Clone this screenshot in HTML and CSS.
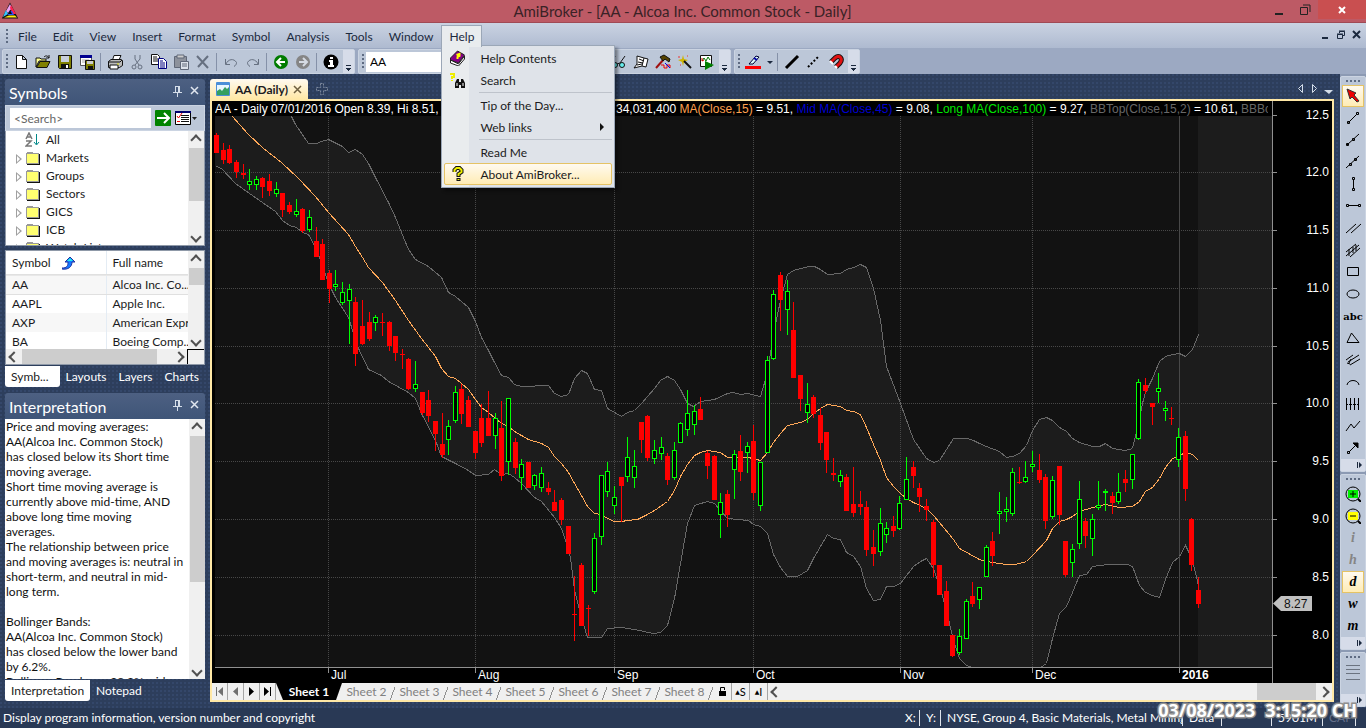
FILE: index.html
```html
<!DOCTYPE html>
<html lang="en">
<head>
<meta charset="utf-8">
<title>AmiBroker - [AA - Alcoa Inc. Common Stock - Daily]</title>
<link rel="stylesheet" href="styles.css">
</head>
<body>
<div class="app">
  <header class="titlebar">
    <svg class="logo" width="18" height="18" viewBox="0 0 18 18"><path d="M9 .5.800 16.500h16.400z" fill="#111"/><path d="M9 2 5 9l2 2 4-5z" fill="#f0a0f0"/><path d="M5 8 2 15l5-3z" fill="#37c5ff"/><path d="M10 3l5 9-3 0-3-6z" fill="#ff2050"/><path d="M8 9h3l2 4-6 0z" fill="#2b50ff"/><path d="M3 15.500l5-2h6l2 2z" fill="#ffee10"/><path d="M9 8l-2 4h4z" fill="#111"/></svg>
    <h1>AmiBroker - [AA - Alcoa Inc. Common Stock - Daily]</h1>
    <div class="winbtns">
      <button aria-label="Minimize"><svg width="12" height="12" viewBox="0 0 12 12"><path d="M2 9h8v2H2z" fill="#222"/></svg></button>
      <button aria-label="Restore"><svg width="12" height="12" viewBox="0 0 12 12"><path d="M1.500 3.500h7v7h-7zM4 1h7v7" fill="none" stroke="#222"/></svg></button>
      <button class="close" aria-label="Close"><svg width="10" height="10" viewBox="0 0 10 10"><path d="M2 2l6 6M8 2l-6 6" stroke="#fff" stroke-width="2"/></svg></button>
    </div>
  </header>

  <nav class="menubar">
    <span class="grip"></span>
    <button>File</button><button>Edit</button><button>View</button><button>Insert</button><button>Format</button><button>Symbol</button><button>Analysis</button><button>Tools</button><button>Window</button>
    <div class="menuhost">
      <button class="open">Help</button>
      <div class="menu">
        <button><svg width="16" height="16" viewBox="0 0 16 16"><path d="M1 8 8 1l7 4-6 8-8-3z" fill="#850085" stroke="#222"/><path d="M1 10l8 4 6-8v3l-6 7-8-3z" fill="#fff" stroke="#222"/><path d="M7 5l3-1v2L8 7v2" stroke="#ff0" stroke-width="2" fill="none"/></svg>Help Contents</button>
        <button><svg width="17" height="16" viewBox="0 0 17 16"><path d="M1 2h4v3H3v2M3 8v1" fill="none" stroke="#ee0" stroke-width="2"/><path d="M6 16v-5l2-4h2v3h2V7h2l2 4v5h-4v-3h-2v3z" fill="#111"/><path d="M8 11v3M14 11v3" stroke="#fff"/></svg>Search</button>
        <hr>
        <button>Tip of the Day...</button>
        <button class="sub">Web links</button>
        <hr>
        <button>Read Me</button>
        <button class="hot"><svg width="16" height="16" viewBox="0 0 16 16"><path d="M5 6V4l2-2h3l2 2v2L9 8v3M9 12v3" fill="none" stroke="#111" stroke-width="4"/><path d="M5 6V4l2-2h3l2 2v2L9 8v2M9 13v1" fill="none" stroke="#ee0" stroke-width="2"/></svg>About AmiBroker...</button>
      </div>
    </div>
    <div class="docbtns">
      <button aria-label="Minimize document"><svg width="10" height="10" viewBox="0 0 10 10"><path d="M2 7h6v2H2z" fill="#1b293e"/></svg></button>
      <button aria-label="Restore document"><svg width="10" height="10" viewBox="0 0 10 10"><path d="M1.500 4.500h5v4h-5zM1 4h6M3.500 3V1.500h5v4H7M3 1h6" fill="none" stroke="#1b293e"/></svg></button>
      <button aria-label="Close document"><svg width="10" height="10" viewBox="0 0 10 10"><path d="M1 1l7 7M8 1L1 8" stroke="#1b293e" stroke-width="2"/></svg></button>
    </div>
  </nav>

  <div class="toolbars">
    <div class="toolbar">
      <span class="grip"></span>
      <button aria-label="New"><svg viewBox="0 0 16 16"><path d="M3.500 1.500h6l4 4v9h-10zM9.500 1.500v4h4" fill="#fff" stroke="#111"/></svg></button>
      <button aria-label="Open"><svg viewBox="0 0 16 16"><path d="M1 4h4l1 1h5v2H4l-3 6z" fill="#ffff90" stroke="#111"/><path d="M1.500 13.500 5 7.500h10l-3 6z" fill="#808000" stroke="#111"/><path d="M9 3c2-2 4-1 5 1M14 1v3h-3" fill="none" stroke="#111"/></svg></button>
      <button aria-label="Save"><svg viewBox="0 0 16 16"><path d="M1.500 1.500h13v13h-12l-1-1z" fill="#808000" stroke="#111"/><path d="M4 2h8v6H4z" fill="#c8cfdc"/><path d="M4 10h8v5H4z" fill="#111"/><path d="M9 11h2v3H9z" fill="#fff"/></svg></button>
      <button aria-label="Save all"><svg viewBox="0 0 16 16"><path d="M1.500 1.500h11v10h-11z" fill="#fff" stroke="#555"/><path d="M1 1h12v3H1z" fill="#000090"/><path d="M3 6h7M3 8h4" stroke="#aaa"/><path d="M6.500 6.500h9v9h-9z" fill="#808000" stroke="#111"/><path d="M8 7h6v3H8z" fill="#ccc"/><path d="M9 12h5v3H9z" fill="#111"/></svg></button>
      <span class="sep"></span>
      <button aria-label="Print"><svg viewBox="0 0 16 16"><path d="M5.500 6 7 1.500h7L12 6" fill="#fff" stroke="#111"/><path d="M1.500 7.500 4 5.500h10l1.500 1v5l-3 2h-11z" fill="#bbb" stroke="#111"/><path d="M1 8h12M13 8l2-2M3 11h8v4H3z" fill="#fff" stroke="#111"/><path d="M10 10h2" stroke="#dd0"/></svg></button>
      <button aria-label="Cut"><svg viewBox="0 0 16 16"><path d="M6 1v4l4 6M11 1v4l-5 6" fill="none" stroke="#667080"/><circle cx="5" cy="13" r="2" fill="none" stroke="#667080"/><circle cx="11" cy="13" r="2" fill="none" stroke="#667080"/></svg></button>
      <button aria-label="Copy"><svg viewBox="0 0 16 16"><path d="M.5.500h6l2 2v8h-8z" fill="#fff" stroke="#111"/><path d="M2 3h4M2 5h5M2 7h5" stroke="#111"/><path d="M7.500 4.500h5l3 3v7h-8z" fill="#fff" stroke="#000080"/><path d="M9 7h3M9 9h5M9 11h5M9 13h5" stroke="#000080"/></svg></button>
      <button aria-label="Paste"><svg viewBox="0 0 16 16"><path d="M1.500 2.500h12v11h-12z" fill="#8d929c" stroke="#606878"/><path d="M4 1h7v3H4z" fill="#ccc" stroke="#606878"/><path d="M7.500 7.500h8v8h-8z" fill="#dde2ea" stroke="#606878"/><path d="M9 10h5M9 12h5" stroke="#606878"/></svg></button>
      <button aria-label="Delete"><svg viewBox="0 0 16 16"><path d="M2 2l11 12M13 2 3 13" stroke="#667080" stroke-width="2"/></svg></button>
      <span class="sep"></span>
      <button aria-label="Undo"><svg viewBox="0 0 16 16"><path d="M2.500 5v5.500H7M3 10c2-5 8-6 10.500-1.500 0 2-1 3-2.500 4" fill="none" stroke="#667080"/></svg></button>
      <button aria-label="Redo"><svg viewBox="0 0 16 16"><path d="M13.500 5v5.500H9M13 10C11 5 5 4 2.500 8.500c0 2 1 3 2.500 4" fill="none" stroke="#667080"/></svg></button>
      <span class="sep"></span>
      <button aria-label="Back"><svg viewBox="0 0 16 16"><circle cx="8" cy="8" r="7" fill="#007c00"/><path d="M12 8H4M8 4 4 8l4 4" fill="none" stroke="#fff" stroke-width="2"/></svg></button>
      <button aria-label="Forward"><svg viewBox="0 0 16 16"><circle cx="8" cy="8" r="7" fill="#858585"/><path d="M4 8h8M8 4l4 4-4 4" fill="none" stroke="#d5dae2" stroke-width="2"/></svg></button>
      <span class="sep"></span>
      <button aria-label="Information"><svg viewBox="0 0 16 16"><circle cx="8" cy="8" r="7.500" fill="#000"/><path d="M7 3h3v2H7zM6 6h4v5h1v2H5v-2h2V8H6z" fill="#fff"/></svg></button>
      <span class="more"></span>
    </div>
    <div class="toolbar">
      <span class="grip"></span>
      <input class="symbolbox" aria-label="Ticker" value="AA">
      <button aria-label="Real-time quote"><svg viewBox="0 0 16 16"><path d="M1 10l3-8M9 9l5-7M6 10l3-1" stroke="#111" fill="none"/><circle cx="4" cy="11" r="2.500" fill="#6ee" stroke="#111"/><circle cx="11" cy="11" r="2.500" fill="#6ee" stroke="#111"/></svg></button>
      <button aria-label="Formula editor"><svg viewBox="0 0 16 16"><path d="M4 2l7 2 4 1-2 8-4-1-8 2 3-4z" fill="#fff" stroke="#111"/><path d="M6 5l5 2M5 8l5 1M4 11l5-1M11 4l-2 8" stroke="#111" fill="none"/></svg></button>
      <button aria-label="Analysis"><svg viewBox="0 0 16 16"><path d="M1 14 9 5" stroke="#a01010" stroke-width="2"/><path d="M5 3l4-2 6 4-1 3-4-3-2 2z" fill="#554400" stroke="#111"/><path d="M6 11h3v3h3v-3h3v3" fill="none" stroke="#e00"/><path d="M10 9l5 5" stroke="#00e"/></svg></button>
      <button aria-label="Wizard"><svg viewBox="0 0 16 16"><path d="M6 1l1 4 4 1-4 2-1 4-1-4-4-2 4-1z" fill="#cfb400"/><path d="M7 7l7 7" stroke="#111" stroke-width="2"/><path d="M2 2v2M10 2h1M3 11h1" stroke="#e33"/></svg></button>
      <button aria-label="Run"><svg viewBox="0 0 16 16"><path d="M1.500 1.500h11v11h-11z" fill="#fff" stroke="#111"/><path d="M3 7l2-3 2 3 2-4 2 3" stroke="#070" fill="none"/><path d="M3 4v3l2-1" stroke="#d00" fill="none"/><path d="M6 7v9l9-5z" fill="#008000"/></svg></button>
      <span class="more"></span>
    </div>
    <div class="toolbar">
      <span class="grip"></span>
      <button aria-label="Line color"><svg viewBox="0 0 16 16"><path d="M0 12h16v3H0z" fill="#f00"/><path d="M4 10 11 2l3 1-6 7z" fill="#dff" stroke="#003"/><path d="M9 4l3 2" stroke="#00a" stroke-width="2"/></svg></button>
      <button class="drop" aria-label="Color list"><svg viewBox="0 0 8 16"><path d="M1 7h6L4 10z" fill="#1b293e"/></svg></button>
      <span class="sep"></span>
      <button aria-label="Thick line"><svg viewBox="0 0 16 16"><path d="M2 14 14 2" stroke="#000" stroke-width="3"/></svg></button>
      <button aria-label="Dotted line"><svg viewBox="0 0 16 16"><path d="M2 13 13 2" stroke="#000" stroke-width="2" stroke-dasharray="2 2"/></svg></button>
      <button aria-label="Snap"><svg viewBox="0 0 16 16"><path d="M3 8l4-4c5-4 8 1 5 5l-4 4" fill="none" stroke="#111" stroke-width="5"/><path d="M3 8l4-4c5-4 8 1 5 5l-4 4" fill="none" stroke="#e01010" stroke-width="3"/><path d="M2 7l3 3M7 12l2 2" stroke="#fff" stroke-width="2"/></svg></button>
      <span class="more"></span>
    </div>
  </div>

  <div class="workspace">
    <aside class="side">
      <section class="pane symbols">
        <h2>Symbols<span class="panebtns"><svg width="9" height="12" viewBox="0 0 9 12"><path d="M2.500 1v6M5.500 1v6M2 1.500h5M6.500 1v6M0 7.500h9M4.500 8v4" stroke="#d5deea" fill="none"/></svg><svg width="9" height="9" viewBox="0 0 9 9"><path d="M1 1l7 7M8 1 1 8" stroke="#e0e6ef" stroke-width="1.500"/></svg></span></h2>
        <div class="search">
          <input aria-label="Search symbols" placeholder="&lt;Search&gt;">
          <button aria-label="Go"><svg width="16" height="16" viewBox="0 0 16 16"><rect width="16" height="16" rx="1" fill="#008300"/><path d="M2 8h11M9 3l5 5-5 5" fill="none" stroke="#fff" stroke-width="2"/></svg></button>
          <button aria-label="Options"><svg width="23" height="16" viewBox="0 0 23 16"><path d="M.5 1.500h15v13H.5z" fill="#fff" stroke="#000"/><path d="M0 1h16v2H0z" fill="#000070"/><path d="M6 5.500h8M6 7.500h8M6 9.500h8M6 11.500h8" stroke="#111"/><path d="M2 6l1.500 2L7 3M2 11.500h3" stroke="#e00" fill="none"/><path d="M17 7h5l-2.500 3z" fill="#222"/></svg></button>
        </div>
        <div class="scrolled tree">
          <ul>
            <li><svg class="az" width="16" height="16" viewBox="0 0 16 16"><path d="M1 7l3-6 3 6M2 5h4M1 9h5l-5 5h6" fill="none" stroke="#777" stroke-width="1.500"/><path d="M11.500 2v10M9 10l2.500 3 2.500-3" fill="none" stroke="#088"/></svg>All</li>
            <li class="folder">Markets</li>
            <li class="folder">Groups</li>
            <li class="folder">Sectors</li>
            <li class="folder">GICS</li>
            <li class="folder">ICB</li>
            <li class="folder">Watch Lists</li>
          </ul>
          <div class="vscroll"><i class="up"></i><b class="t53"></b><i class="down"></i></div>
        </div>
        <div class="list">
          <div class="scrolled">
            <table>
              <thead><tr><th>Symbol <svg width="15" height="14" viewBox="0 0 15 14"><path d="M0 12c5 0 6-2 6-6H3l5-5 5 5h-3c0 5-4 8-10 7z" fill="#1478ff" stroke="#2030a0"/><path d="M5 5l3-3 3 3z" fill="#2ee"/></svg></th><th>Full name</th></tr></thead>
              <tbody>
                <tr><td>AA</td><td>Alcoa Inc. Co...</td></tr>
                <tr><td>AAPL</td><td>Apple Inc.</td></tr>
                <tr><td>AXP</td><td>American Expr...</td></tr>
                <tr><td>BA</td><td>Boeing Comp...</td></tr>
              </tbody>
            </table>
            <div class="vscroll"><i class="up"></i><b class="t17"></b><i class="down"></i></div>
          </div>
          <div class="hscroll"><i class="left"></i><b></b><i class="right"></i><span class="corner"></span></div>
        </div>
      </section>
      <div class="tabs"><button class="on">Symb...</button><button>Layouts</button><button>Layers</button><button>Charts</button></div>
      <section class="pane interp">
        <h2>Interpretation<span class="panebtns"><svg width="9" height="12" viewBox="0 0 9 12"><path d="M2.500 1v6M5.500 1v6M2 1.500h5M6.500 1v6M0 7.500h9M4.500 8v4" stroke="#d5deea" fill="none"/></svg><svg width="9" height="9" viewBox="0 0 9 9"><path d="M1 1l7 7M8 1 1 8" stroke="#e0e6ef" stroke-width="1.500"/></svg></span></h2>
        <div class="scrolled">
          <p>Price and moving averages:<br>AA(Alcoa Inc. Common Stock)<br>has closed below its Short time<br>moving average.<br>Short time moving average is<br>currently above mid-time, AND<br>above long time moving<br>averages.<br>The relationship between price<br>and moving averages is: neutral in<br>short-term, and neutral in mid-<br>long term.<br><br>Bollinger Bands:<br>AA(Alcoa Inc. Common Stock)<br>has closed below the lower band<br>by 6.2%.<br>Bollinger Bands are 28.2% wider</p>
          <div class="vscroll"><i class="up"></i><b class="t146"></b><i class="down"></i></div>
        </div>
      </section>
      <div class="tabs low"><button class="on">Interpretation</button><button>Notepad</button></div>
    </aside>

    <main class="doc">
      <div class="doctabs">
        <button class="doctab"><svg width="14" height="14" viewBox="0 0 14 14"><rect width="14" height="14" rx="1" fill="#4b8fd8"/><path d="M1 3h12v10H1z" fill="#e8f6ff"/><path d="M1 13V9l3-2 2 2 3-4 2 2 2-2v8z" fill="#35a060"/></svg>AA (Daily)<svg width="9" height="9" viewBox="0 0 9 9"><path d="M1 1l7 7M8 1 1 8" stroke="#6f6040" stroke-width="1.500"/></svg></button>
        <button class="plus" aria-label="New chart"><svg width="12" height="12" viewBox="0 0 12 12"><path d="M4.500.500h3v4h4v3h-4v4h-3v-4h-4v-3h4z" fill="none" stroke="#7c889c" stroke-dasharray="2 1"/></svg></button>
        <svg class="tabnav" width="38" height="12" viewBox="0 0 38 12"><path d="M6.500 1.500v8l-4-4zM16.500 1.500v8l4-4z" fill="none" stroke="#d5deea"/><path d="M28 7h9l-4 4z" fill="#d5deea"/></svg>
      </div>
      <div class="docbody">
        <div class="readout"><span class="quote">AA - Daily 07/01/2016 Open 8.39, Hi 8.51, Lo 8.12, Close 8.27 (-4.1%) Vol</span><span>34,031,400 <span class="c15">MA(Close,15)</span> = 9.51, <span class="c45">Mid MA(Close,45)</span> = 9.08, <span class="c100">Long MA(Close,100)</span> = 9.27, <span class="bb">BBTop(Close,15,2)</span> = 10.61, <span class="bb">BBBot(Close,15,2)</span></span></div>
        <svg class="chart" id="chart" viewBox="212 116 1120 567" role="img" aria-label="AA daily candlestick chart"></svg>
        <div class="sheets">
          <div class="sheetnav">
            <button aria-label="First"><svg width="9" height="9" viewBox="0 0 9 9"><path d="M1 0h1v9H1zM8 0v9L3 4.500z" fill="#707070"/></svg></button>
            <button aria-label="Previous"><svg width="9" height="9" viewBox="0 0 9 9"><path d="M7 0v9L2 4.500z" fill="#707070"/></svg></button>
            <button aria-label="Next"><svg width="9" height="9" viewBox="0 0 9 9"><path d="M2 0v9l5-4.500z"/></svg></button>
            <button aria-label="Last"><svg width="9" height="9" viewBox="0 0 9 9"><path d="M7 0h1v9H7zM1 0v9l5-4.500z"/></svg></button>
          </div>
          <button class="sheet on">Sheet 1</button><button class="sheet">Sheet 2</button><button class="sheet">Sheet 3</button><button class="sheet">Sheet 4</button><button class="sheet">Sheet 5</button><button class="sheet">Sheet 6</button><button class="sheet">Sheet 7</button><button class="sheet">Sheet 8</button>
          <div class="locks"><button aria-label="Lock"><svg width="9" height="11" viewBox="0 0 9 11"><path d="M1 5h7v5H1z"/><path d="M2.500 5V1.500h4V4" fill="none" stroke="#000"/></svg></button><button><small>▲</small>S</button><button><small>▲</small>I</button></div>
          <div class="hscroll"><i class="left"></i><b></b><i class="right"></i></div>
        </div>
      </div>
    </main>

    <aside class="rail">
      <div class="railbar">
        <span class="hgrip"></span>
        <button class="on" aria-label="Select"><svg viewBox="0 0 16 16"><path d="M2 1l9 4-2 2 5 6-2 1-5-5-2 2z" fill="#e00" stroke="#333"/></svg></button>
        <button aria-label="Trend line"><svg viewBox="0 0 16 16"><path d="M3.500 12.500l8-8"/><path d="M2.500 11.500h2v2h-2zM11.500 2.500h2v2h-2z"/></svg></button>
        <button aria-label="Ray"><svg viewBox="0 0 16 16"><path d="M2 13 14 2"/><path d="M1.500 11.500h2v2h-2zM7.500 6.500h2v2h-2z"/></svg></button>
        <button aria-label="Extended line"><svg viewBox="0 0 16 16"><path d="M1 14 14 2"/><path d="M4.500 9.500h2v2h-2zM9.500 4.500h2v2h-2z"/></svg></button>
        <button aria-label="Vertical line"><svg viewBox="0 0 16 16"><path d="M8.500 3v9M7.500 1.500h2v2h-2zM7.500 12.500h2v2h-2z"/></svg></button>
        <button aria-label="Horizontal line"><svg viewBox="0 0 16 16"><path d="M3 7.500h10M1.500 6.500h2v2h-2zM13.500 6.500h2v2h-2z"/></svg></button>
        <button aria-label="Parallel lines"><svg viewBox="0 0 16 16"><path d="M1 13l10-9M6 13l10-9"/></svg></button>
        <button aria-label="Regression channel"><svg viewBox="0 0 16 16"><path d="M1 10l10-8M5 15l10-9M1 14 14 3M4 7v7M8 5v6M11 3v6"/></svg></button>
        <button aria-label="Rectangle"><svg viewBox="0 0 16 16"><path d="M2.500 3.500h11v8h-11z"/></svg></button>
        <button aria-label="Ellipse"><svg viewBox="0 0 16 16"><ellipse cx="8" cy="8" rx="6" ry="4"/></svg></button>
        <button class="abc">abc</button>
        <button aria-label="Triangle"><svg viewBox="0 0 16 16"><path d="M2 12.500h12L6.500 3z"/></svg></button>
        <button aria-label="Pitchfork"><svg viewBox="0 0 16 16"><path d="M1 8l7-5M3 10l11-7M5 13l10-6M2 11l3 1M6 7l-2 4"/></svg></button>
        <button aria-label="Arc"><svg viewBox="0 0 16 16"><path d="M2 11c1-6 11-6 12 0"/></svg></button>
        <button aria-label="Time zones"><svg viewBox="0 0 16 16"><path d="M1.500 2v12M5.500 2v12M9.500 2v12M13.500 2v12"/><path d="M2 8.500h12" stroke-dasharray="1 1"/></svg></button>
        <button aria-label="Zig-zag"><svg viewBox="0 0 16 16"><path d="M1 13 6 6l3 4 6-7"/></svg></button>
        <button aria-label="Arrow"><svg viewBox="0 0 16 16"><path d="M4 12l6-6"/><path d="M8 3h5v5z" fill="#000"/><path d="M2.500 11.500h2v2h-2z"/></svg></button>
        <span class="railmore"></span>
      </div>
      <div class="railbar">
        <span class="hgrip"></span>
        <button aria-label="Zoom in"><svg viewBox="0 0 16 16"><circle cx="8" cy="8" r="7"/><path d="M13 13l3 3" stroke-width="2"/><rect x="3" y="4" width="10" height="8" fill="#0e0" stroke="none"/><path d="M5 8h6M8 5v6"/></svg></button>
        <button aria-label="Zoom out"><svg viewBox="0 0 16 16"><circle cx="8" cy="8" r="7"/><path d="M13 13l3 3" stroke-width="2"/><rect x="3" y="4" width="10" height="8" fill="#ff0" stroke="none"/><path d="M5 8h6"/></svg></button>
        <button class="ltr off">i</button><button class="ltr off">h</button><button class="ltr on">d</button><button class="ltr">w</button><button class="ltr">m</button>
        <span class="railmore"></span>
      </div>
      <div class="railbar last">
        <span class="hgrip"></span>
        <button aria-label="Layers"><svg viewBox="0 0 16 16"><path d="M1 1.500h14M1 5.500h14M1 9.500h14M1 15.500h14" stroke="#6b7380"/></svg></button>
        <span class="railmore"></span>
      </div>
    </aside>
  </div>

  <footer class="status">
    <span class="msg">Display program information, version number and copyright</span>
    <span class="x">X:</span><span class="y">Y:</span><span class="grp">NYSE, Group 4, Basic Materials, Metal Mining</span><span class="data">Data</span><span class="blank"></span><span class="mem">5901M</span><span class="cap">CAP</span>
    <time class="stamp"><span>03/08/2023</span><span>3:15:20 CH</span></time>
  </footer>
</div>
<script src="chart.js"></script>
</body>
</html>
```
FILE: styles.css
```css
* { box-sizing: border-box; }
html, body { margin: 0; height: 100%; }
body { font: 12px/15px Lato, "Open Sans", sans-serif; color: #1b1b22; overflow: hidden; }
button { font: inherit; color: inherit; background: none; border: 0; padding: 0; margin: 0; display: flex; align-items: center; justify-content: center; white-space: nowrap; }
input { font: inherit; border: 0; padding: 0 4px; min-width: 0; }
svg { display: block; flex: none; }
h1, h2, p, ul { margin: 0; padding: 0; font-weight: 400; }

.app { height: 100vh; display: flex; flex-direction: column; background: #2d3e5c; }

.titlebar { height: 23px; flex: none; display: flex; align-items: center; background: #bd5a65; border-bottom: 1px solid #a04a55; }
.logo { margin-left: 1px; }
.titlebar h1 { flex: 1; text-align: center; font-size: 15px; line-height: 22px; color: #3a2226; padding-left: 80px; }
.winbtns { display: flex; align-self: flex-start; height: 19px; }
.winbtns button { width: 26px; }
.winbtns .close { width: 48px; background: #c94f50; }

.menubar { height: 25px; flex: none; display: flex; align-items: stretch; padding: 3px 0 0 4px; background: linear-gradient(#cad3e2, #aebad0); color: #1b293e; }
.menubar > button { padding: 0 8px; height: 20px; }
.grip { width: 2px; margin: 3px 2px; background: repeating-linear-gradient(#5e6b82 0 2px, transparent 2px 4px); flex: none; }
.menubar .grip { margin: 3px 2px 5px 2px; }
.menuhost { position: relative; z-index: 5; }
.menuhost > .open { background: #e9ecee; border: 1px solid #9ba7b7; border-bottom: 0; padding: 0 7px; height: 22px; width: 41px; position: relative; z-index: 2; margin-top: -1px; }
.menu { position: absolute; left: 0; top: 19px; width: 174px; padding: 1px 2px 2px; background: linear-gradient(90deg, #e9ecee 27px, #dfe3e9 27px); border: 1px solid #9ba7b7; box-shadow: 3px 3px 3px #0006; color: #1b1b22; }
.menu button { width: 100%; height: 22px; justify-content: flex-start; padding-left: 35px; border: 1px solid transparent; }
.menu svg { margin: 0 14px 0 -31px; width: 17px; }
.menu hr { margin: 1px 0 1px 35px; border: 0; border-top: 1px solid #bec3cb; }
.menu .hot { background: linear-gradient(#fffaf0, #ffecb5); border-color: #e5c365; border-radius: 2px; }
.menu .sub::after { content: ""; margin-left: auto; margin-right: 7px; border: 4px solid transparent; border-left-color: #111; border-right: 0; }
.docbtns { margin-left: auto; display: flex; gap: 6px; padding: 0 4px 5px 0; }

.toolbars { height: 26px; flex: none; display: flex; gap: 3px; background: #9ca9c2; padding: 1px 0 0 2px; }
.toolbar { display: flex; align-items: center; background: #bcc7d8; border: 1px solid #cbd4e2; border-radius: 2px; height: 25px; padding-left: 1px; }
.toolbar .grip { height: 16px; }
.toolbar button { width: 22px; height: 22px; }
.toolbar button svg { width: 16px; height: 16px; }
.toolbar .drop { width: 11px; }
.toolbar .drop svg { width: 8px; }
.sep { width: 1px; height: 18px; margin: 0 3px 0 2px; background: #8591a8; flex: none; }
.more { width: 11px; align-self: stretch; margin-left: 1px; background: linear-gradient(#1b293e, #1b293e) 3px 15px / 5px 1px no-repeat, conic-gradient(from -45deg at 50% 100%, #1b293e 90deg, transparent 0) 3px 18px / 5px 3px no-repeat, #d6dce9; }
.symbolbox { width: 241px; height: 20px; background: #fff; margin-right: 1px; }

.workspace { flex: 1; min-height: 0; display: flex; padding: 0 0 0 5px; background: radial-gradient(circle at 1px 1px, #34476a 1px, transparent 1px) 0 0 / 4px 4px, #2d3e5c; }
.side { width: 200px; flex: none; display: flex; flex-direction: column; padding: 5px 0 7px; }
.pane { display: flex; flex-direction: column; min-height: 0; }
.pane h2 { height: 26px; flex: none; display: flex; justify-content: space-between; align-items: center; padding: 2px 6px 0 4px; font-size: 16px; line-height: 20px; color: #fff; background: linear-gradient(#4d6082, #3f5578); border-radius: 3px 3px 0 0; }
.panebtns { display: flex; gap: 8px; align-items: center; padding-bottom: 5px; }
.search { height: 26px; flex: none; display: flex; align-items: center; gap: 4px; padding-left: 4px; background: #bcc7d8; border: 1px solid #cbd4e2; }
.search input { width: 141px; height: 20px; }
.search input::placeholder { color: #666; opacity: 1; }
.scrolled { display: flex; overflow: hidden; background: #fff; }
.scrolled > :first-child { flex: 1; min-width: 0; }
.vscroll { width: 16px; flex: none; background: #f0f0f0; display: flex; flex-direction: column; align-items: center; }
.vscroll i, .hscroll i { width: 16px; height: 17px; display: flex; align-items: center; justify-content: center; flex: none; }
.vscroll i::before, .hscroll i::before { content: ""; width: 6px; height: 6px; border: solid #505050; border-width: 2px 0 0 2px; transform: rotate(45deg); }
.vscroll .down { margin-top: auto; }
.vscroll .down::before { transform: rotate(225deg); }
.hscroll .left::before { transform: rotate(-45deg); }
.hscroll .right::before { transform: rotate(135deg); }
.vscroll b { width: 15px; background: #cdcdcd; }
.t53 { height: 53px; }
.t17 { height: 17px; }
.t146 { height: 146px; }
.tree { height: 115px; border: 1px solid #8f99a8; border-top: 0; }
.tree ul { list-style: none; }
.tree li { height: 18px; display: flex; align-items: center; gap: 6px; padding-left: 19px; line-height: 18px; }
.tree .az { margin-right: -1px; }
.tree .folder { padding-left: 10px; gap: 0; background: linear-gradient(#ffff70, #ffff70) 21px 5px / 11px 9px no-repeat, linear-gradient(#999, #999) 21px 3px / 6px 2px no-repeat, linear-gradient(#999, #999) 20px 4px / 13px 11px no-repeat, linear-gradient(#111, #111) 21px 5px / 13px 11px no-repeat; }
.tree .folder::before { content: ""; width: 6px; height: 10px; margin: 2px 24px 0 0; background: #a0a0a0; clip-path: polygon(0 0, 100% 50%, 0 100%, 0 0, 1px 2px, 1px 8px, 4px 5px, 1px 2px); }
.list { margin-top: 4px; height: 115px; border: 1px solid #8f99a8; background: #fff; display: flex; flex-direction: column; }
.list .scrolled { height: 98px; }
table { border-collapse: collapse; table-layout: fixed; width: 100%; }
table th, table td { padding: 0 0 0 6px; height: 19px; font-weight: 400; text-align: left; white-space: nowrap; overflow: hidden; }
table th { height: 24px; border-bottom: 1px solid #e8e8e8; }
table th:first-child { width: 100px; }
table th + th, table td + td { border-left: 1px solid #e4ecf4; }
table th svg { display: inline-block; vertical-align: -3px; margin-left: 8px; }
tbody tr:nth-child(odd) { background: #f7f7f7; }
tbody tr:first-child { outline: 1px solid #e0e0e0; }
.hscroll { height: 16px; display: flex; align-items: stretch; background: #f0f0f0; flex: 1; }
.hscroll i { height: 100%; }
.hscroll b { background: #cdcdcd; }
.list .hscroll b { width: 135px; }
.list .hscroll .right { margin-left: auto; }
.corner { width: 17px; border: solid #000; border-width: 1px 0 0 1px; }
.tabs { display: flex; height: 21px; flex: none; margin-top: 1px; color: #fff; }
.tabs button { padding: 0 6px; }
.tabs .on { background: #fff; color: #1b1b22; border-radius: 0 0 3px 3px; width: 56px; justify-content: flex-start; }
.tabs.low .on { width: auto; }
.interp { flex: 1; margin-top: 6px; }
.interp .scrolled { flex: 1; }
.interp p { padding-left: 1px; color: #111; white-space: nowrap; }

.doc { flex: 1; min-width: 0; margin: 5px 6px 6px 5px; display: flex; flex-direction: column; }
.doctabs { height: 20px; flex: none; display: flex; align-items: center; }
.doctab { height: 20px; padding: 0 6px; gap: 5px; background: linear-gradient(#fffaf0, #ffe8a6); border-radius: 3px 3px 0 0; font-weight: 700; color: #1b1b22; }
.plus { margin-left: 8px; }
.tabnav { margin-left: auto; }
.docbody { flex: 1; min-height: 0; display: flex; flex-direction: column; border: 2px solid #ffe8a6; background: #000; }
.readout { height: 15px; flex: none; padding-left: 3px; font: 12px/16px "Liberation Sans", sans-serif; color: #fff; white-space: nowrap; overflow: hidden; display: flex; width: calc(100% - 64px); }
.quote { width: 401px; flex: none; overflow: hidden; }
.c15 { color: #ffa050; }
.c45 { color: #0000d0; }
.c100 { color: #00e800; }
.bb { color: #686868; }
.chart { flex: 1; min-height: 0; width: 100%; overflow: visible; }
.chart text { font: 12px "Liberation Sans", sans-serif; fill: #fff; }
.sheets { height: 17px; flex: none; display: flex; background: #f0f0f0; }
.sheetnav, .locks { display: flex; flex: none; }
.sheetnav button, .locks button { border: solid #a5a5a5; border-width: 0 1px 0 0; color: #000; width: 16px; }
.sheet { width: 53px; color: #808080; padding-right: 4px; background: linear-gradient(290deg, transparent 4px, #909090 4px 5px, transparent 5px) #f0f0f0; }
.sheet.on { width: 66px; color: #fff; font-weight: 700; background: #000; clip-path: polygon(0 0, 100% 0, calc(100% - 6px) 100%, 7px 100%); padding: 0; }
.locks { margin-left: 1px; }
.locks button { width: 18px; font-size: 11px; }
.locks small { font: 6px "DejaVu Sans", sans-serif; }
.sheets .hscroll { flex: 1; height: 17px; }
.sheets .hscroll b { width: 59px; margin-left: auto; }

.rail { width: 26px; flex: none; padding: 2px 0 0; background: #8c9ab3; display: flex; flex-direction: column; gap: 2px; margin-bottom: 1px; }
.railbar { background: #bcc7d8; border: 1px solid #cbd4e2; display: flex; flex-direction: column; align-items: center; border-radius: 2px; }
.railbar.last { flex: 1; }
.hgrip { height: 2px; width: 14px; margin: 3px 0; background: repeating-linear-gradient(90deg, #5e6b82 0 2px, transparent 2px 4px); }
.railbar button { width: 22px; height: 22px; border: 1px solid transparent; }
.railbar button svg { width: 16px; height: 16px; fill: none; stroke: #000; }
.railbar .on { background: linear-gradient(#fffaf0, #ffecb5); border-color: #e5c365; }
.railbar .abc { font: 700 11px "DejaVu Serif", serif; font-size: 10px; color: #000; }
.ltr { font: italic 700 14px "Liberation Serif", serif; color: #000; }
.ltr.off { color: #858585; }
.railmore { height: 12px; width: 100%; margin-top: auto; background: #d6dce9; display: flex; align-items: center; justify-content: flex-end; padding-right: 3px; }
.railmore::before { content: ""; width: 1px; height: 6px; background: #1b293e; margin-right: 1px; }
.railmore::after { content: ""; border: 3px solid transparent; border-left-color: #1b293e; border-right: 0; }

.status { height: 20px; flex: none; display: flex; align-items: center; background: #293955; color: #fff; padding: 0 10px 0 3px; position: relative; line-height: 18px; }
.status .msg { flex: 1; }
.status > span:not(.msg) { border-right: 1px solid #dfe4ec; padding: 0 0 0 6px; white-space: nowrap; overflow: hidden; height: 16px; line-height: 16px; }
.status .x, .status .y { width: 21px; }
.status .grp { width: 242px; }
.status > .data { width: 39px; padding-left: 11px; }
.status .blank { width: 50px; }
.status > .mem { width: 51px; padding-left: 9px; }
.status > .cap { width: 33px; color: #65708a; }
.stamp { position: absolute; right: 9px; top: -8px; display: flex; gap: 10px; font: 700 18px/20px "Open Sans", sans-serif; color: #fff; -webkit-text-stroke: 3px #8a8a8a; paint-order: stroke fill; text-shadow: 0 0 3px #aaa; }
```
FILE: chart.js
```js
// One entry per bar: colour, high, body top, body bottom, low (in chart units).
const bars = `r133 135 153 153,r143 150 160 164,r145 149 163 164,r160 162 172 178,r164 173 175 179,g169 181 185 190,g176 179 185 190,r177 178 187 198,r174 181 191 196,g182 189 194 197,r193 193 210 217,r202 205 212 214,g199 211 215 217,r208 209 231 233,g210 217 230 232,r227 241 257 257,r239 244 280 280,r270 273 289 303,g270 284 287 291,g282 292 303 305,g284 289 301 344,r297 302 354 366,r300 326 344 345,r312 322 339 341,g315 317 323 331,r313 322 323 336,r321 322 346 351,r336 336 353 361,r349 354 355 369,r358 359 389 390,g361 384 389 392,r392 392 413 415,r390 400 416 422,r421 421 434 451,r413 444 455 458,g420 426 440 455,g386 392 421 423,r384 389 414 424,r396 400 427 427,r431 431 453 459,r404 418 443 447,r391 418 436 436,g413 418 436 449,r401 428 476 481,g398 398 462 475,r438 442 468 474,g459 464 478 490,r462 462 488 488,g474 475 486 490,g467 473 488 492,r482 488 492 495,r490 502 511 511,r498 500 520 525,r526 526 554 554,r576 614 615 641,r563 565 626 626,r605 608 609 636,g533 538 592 594,g475 475 537 545,g462 471 492 497,g486 497 506 514,r477 477 486 522,g437 457 477 482,g450 466 478 488,r422 422 440 453,r415 416 458 461,g440 450 459 464,g437 447 454 460,r453 456 480 485,g442 450 478 480,g422 423 443 443,g390 413 430 436,g405 411 425 435,r397 409 420 420,r451 453 466 479,r455 456 500 500,g493 502 515 538,r490 494 515 527,g450 454 470 499,r435 451 472 481,g442 446 453 473,r425 441 493 500,g462 462 506 511,g356 360 453 453,g290 294 359 360,r272 275 300 331,g280 291 310 335,r302 330 378 378,r375 375 399 411,g383 404 413 423,r395 397 414 418,r408 415 443 450,r432 432 460 473,r458 473 475 481,g470 475 482 487,r474 477 511 511,r467 504 513 517,r491 504 507 515,r501 507 550 556,r530 547 554 566,g508 523 552 556,g522 528 535 543,r516 526 531 537,g496 503 529 530,g457 479 500 500,r461 467 476 488,r483 488 497 512,r499 506 510 521,r520 522 565 577,r565 565 595 595,r581 591 626 626,r635 635 656 657,g629 636 653 655,g599 601 639 639,r582 596 604 607,g587 587 600 609,g545 547 577 577,r532 541 556 566,g492 511 514 534,g497 509 512 522,g468 472 514 516,r467 482 483 484,g461 477 482 483,g451 464 467 472,r454 470 480 483,r474 477 521 529,g476 480 517 519,r466 466 515 525,r541 541 575 577,g544 549 563 577,g481 499 544 549,r518 521 536 548,g514 519 539 556,g481 505 508 510,g489 491 493 511,r492 496 503 514,g473 492 502 504,r470 479 483 492,g454 454 480 489,g379 382 439 440,r378 385 391 394,r403 403 407 425,g373 388 392 403,g401 408 411 421,r407 418 419 425,g428 437 460 467,r431 436 489 501,r518 519 565 571,r577 590 604 608`.split(",");

const average = "232,116 248,134 263,148 281,162 298,178 315,196 328,212 348,234 355,246 362,257 368,267 382,282 395,300 408,320 421,338 435,356 441,368 448,376 455,378 461,383 468,389 475,399 481,407 488,412 501,423 508,426 514,431 528,439 541,443 548,447 554,456 561,463 568,472 574,483 581,495 587,506 594,513 601,514 607,518 614,521 621,521 627,520 637,519 647,514 654,510 667,501 674,490 680,476 687,464 694,455 700,452 707,450 720,452 727,457 748,457 760,460 767,452 773,442 780,433 787,425 800,422 807,419 813,413 820,408 827,404 840,406 846,410 853,411 860,414 866,427 873,444 880,460 886,477 893,486 900,493 906,498 913,502 926,508 933,515 939,522 953,539 959,548 979,559 986,561 999,563 1006,564 1015,564 1026,561 1032,555 1046,540 1052,528 1059,521 1066,519 1072,516 1079,511 1092,507 1105,504 1119,507 1132,506 1139,501 1145,491 1152,487 1159,478 1165,467 1172,458 1179,455 1185,452 1192,454 1198,460";
const upper = "291,116 295,124 308,143 316,143 321,141 328,139 342,146 348,152 355,149 362,154 368,163 375,177 388,202 395,217 401,232 408,249 415,259 428,266 441,277 448,292 455,296 468,307 475,321 481,337 488,350 493,360 501,375 508,377 514,384 521,386 548,385 554,393 561,396 568,394 574,378 581,370 587,373 594,389 601,390 607,408 621,416 627,412 634,410 641,403 654,388 660,380 667,376 674,380 680,389 687,403 693,406 700,401 714,399 727,393 733,392 740,394 747,393 760,396 767,372 773,333 780,300 787,274 793,270 808,266 814,266 820,269 827,274 840,273 846,269 853,267 860,264 866,267 873,288 880,320 886,366 900,403 913,439 926,458 933,462 939,460 953,438 967,438 973,440 979,443 986,446 999,451 1006,457 1012,456 1019,453 1026,445 1032,430 1039,419 1046,417 1052,420 1059,427 1066,431 1072,438 1079,442 1092,446 1099,446 1105,443 1112,448 1125,450 1132,448 1137,427 1142,403 1145,392 1152,378 1159,361 1165,356 1172,354 1179,353 1185,356 1192,349 1198,334";
const lower = "216,166 221,168 235,183 249,193 262,202 275,211 282,220 289,225 296,227 302,232 308,234 315,247 322,265 328,283 335,297 348,317 353,333 358,348 368,369 381,375 388,381 408,392 415,398 421,413 435,440 441,456 455,463 468,470 475,475 488,474 494,469 501,474 508,473 514,477 521,483 534,497 541,501 554,517 561,528 566,543 570,557 574,590 581,617 587,637 601,637 607,628 621,627 634,629 653,633 660,632 667,625 674,598 680,563 687,523 694,505 707,501 714,503 727,518 748,520 753,524 760,526 767,533 773,554 780,567 787,576 797,576 807,570 813,558 827,534 833,538 840,539 846,552 853,556 860,566 866,588 873,600 880,599 886,586 893,586 900,583 913,566 920,561 926,558 933,568 939,585 946,610 953,640 959,658 966,665 972,667 1040,667 1046,663 1052,638 1059,613 1066,606 1072,592 1079,575 1086,574 1092,566 1108,564 1127,564 1132,566 1139,585 1145,592 1152,595 1159,597 1165,579 1172,562 1179,556 1185,545 1190,555 1194,568 1198,585 1198,600";

const prices = [["12.5", 115], ["12.0", 172], ["11.5", 230], ["11.0", 288], ["10.5", 346], ["10.0", 403], ["9.5", 461], ["9.0", 519], ["8.5", 577], ["8.0", 635]];
const months = [["Jul", 328], ["Aug", 475], ["Sep", 614], ["Oct", 753], ["Nov", 900], ["Dec", 1032], ["2016", 1179]];

const out = [];
const rect = (x, y, w, h, fill) => out.push(`<rect x="${x}" y="${y}" width="${w}" height="${h}" fill="${fill}"/>`);
const line = (points, stroke) => out.push(`<polyline points="${points}" transform="translate(.5 .5)" fill="none" stroke="${stroke}" shape-rendering="crispEdges"/>`);

rect(212, 116, 1120, 567, "#000");
rect(215, 116, 1057, 551, "#1c1c1c");
out.push(`<polygon points="291,116 ${upper} 1198,116" fill="#121212"/>`);
out.push(`<polygon points="215,166 ${lower} 1198,667 215,667" fill="#121212"/>`);
for (const [label, y] of prices) {
  if (y > 116) out.push(`<path d="M215 ${y}.5H1272" stroke="#484848" stroke-dasharray="1 1"/>`);
  rect(1273, y, 4, 1, "#909090");
  out.push(`<text x="1329" y="${y + 4}" text-anchor="end">${label}</text>`);
}
for (const [label, x] of months) {
  const year = label === "2016";
  out.push(`<path d="M${x}.5 116V667" stroke="#484848" ${year ? "" : 'stroke-dasharray="1 1"'}/>`);
  rect(x, 668, 1, 5, "#909090");
  out.push(`<text x="${x + 3}" y="679" ${year ? 'style="font-weight:700"' : ""}>${label}</text>`);
}
line(upper, "#686868");
line(lower, "#686868");
line(average, "#ffa858");
bars.forEach((bar, i) => {
  const x = Math.round(216 + i * 6.635);
  const color = bar[0] === "r" ? "#f00" : "#0f0";
  const [high, top, bottom, low] = bar.slice(1).split(" ").map(Number);
  rect(x, high, 1, Math.max(low - high, 1), color);
  rect(x - 2, top, 5, bottom - top, color);
  if (bar[0] === "g" && bottom - top > 2) rect(x - 1, top + 1, 3, bottom - top - 2, "#000");
});
rect(215, 667, 1058, 1, "#909090");
rect(1272, 101, 1, 582, "#909090");
out.push('<path d="M1273 603.500l8-7.500h31v15h-31z" fill="#c0c0c0"/><text x="1284" y="608" style="fill:#111">8.27</text>');
document.getElementById("chart").innerHTML = out.join("");
```
